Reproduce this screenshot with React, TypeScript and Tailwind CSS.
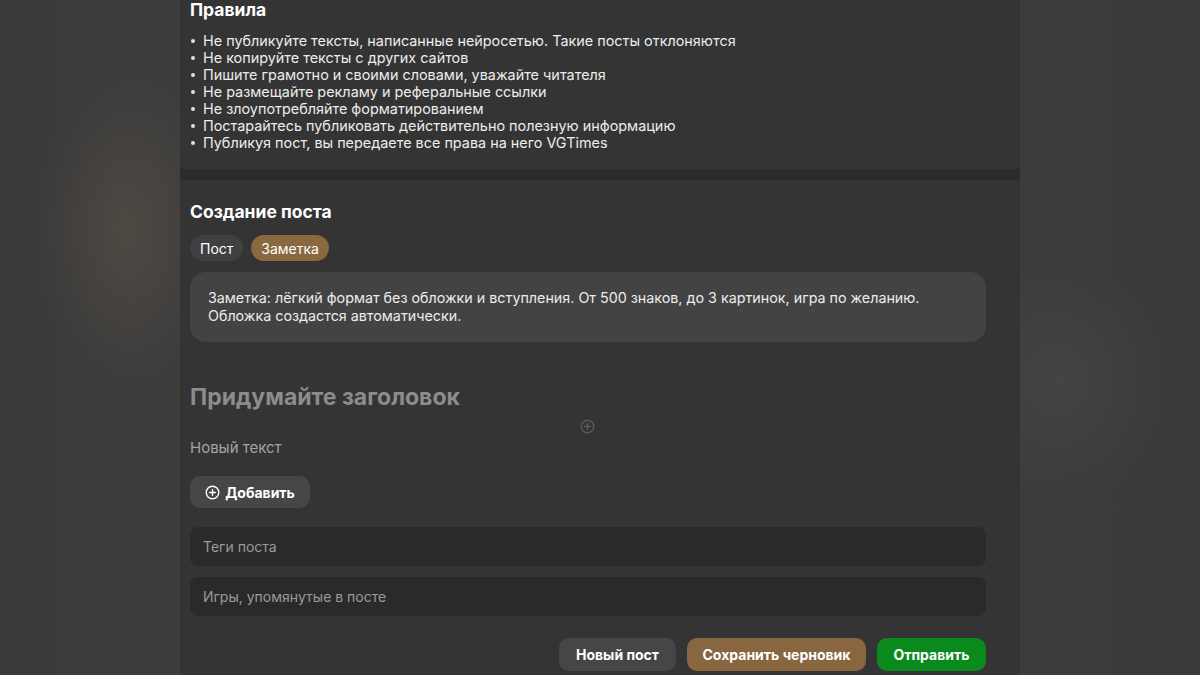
import { useState } from "react";

const rules = [
  "Не публикуйте тексты, написанные нейросетью. Такие посты отклоняются",
  "Не копируйте тексты с других сайтов",
  "Пишите грамотно и своими словами, уважайте читателя",
  "Не размещайте рекламу и реферальные ссылки",
  "Не злоупотребляйте форматированием",
  "Постарайтесь публиковать действительно полезную информацию",
  "Публикуя пост, вы передаете все права на него VGTimes",
];

function CirclePlus({ className }: { className?: string }) {
  return (
    <svg viewBox="0 0 24 24" fill="none" stroke="currentColor" strokeWidth={2.2} strokeLinecap="round" className={className}>
      <circle cx="12" cy="12" r="10" />
      <path d="M12 7.5v9M7.5 12h9" />
    </svg>
  );
}

export default function App() {
  const [kind, setKind] = useState<"post" | "note">("note");

  return (
    <div
      className="min-h-[675px] w-full flex justify-center font-['Inter',sans-serif] text-white bg-[#383838] bg-[radial-gradient(ellipse_90px_160px_at_125px_230px,rgba(120,100,80,0.3),transparent),radial-gradient(ellipse_110px_120px_at_1060px_380px,rgba(80,80,80,0.4),transparent),linear-gradient(to_right,#3a3a3a,#424242_40%,#3a3a3a)]"
    >
      <main className="w-[840px] bg-[#343434] flex flex-col">
        {/* rules */}
        <section className="pl-[10px] pr-[34px] pb-[18px]">
          <h2 className="text-[17.5px] leading-[20px] font-bold">Правила</h2>
          <ul className="mt-3 text-[14.4px] leading-[17px] text-[#ececec]">
            {rules.map((r) => (
              <li key={r} className="flex items-center">
                <span className="w-[13px] shrink-0 flex">
                  <span className="ml-[1px] w-[4px] h-[4px] rounded-full bg-[#e0e0e0]" />
                </span>
                <span>{r}</span>
              </li>
            ))}
          </ul>
        </section>

        <div className="h-[11px] bg-[#2b2b2b]" />

        {/* editor */}
        <section className="relative pl-[10px] pr-[34px] pt-[22px] pb-[3px]">
          <h2 className="text-[17.5px] leading-[20px] font-bold">Создание поста</h2>

          <div className="mt-[13px] flex gap-2 text-[14px]">
            <button
              onClick={() => setKind("post")}
              className={`h-[26px] px-[10px] rounded-full ${kind === "post" ? "bg-[#8a6940]" : "bg-[#404040]"}`}
            >
              Пост
            </button>
            <button
              onClick={() => setKind("note")}
              className={`h-[26px] px-[10px] rounded-full ${kind === "note" ? "bg-[#8a6940]" : "bg-[#404040]"}`}
            >
              Заметка
            </button>
          </div>

          <div className="mt-[11px] h-[70px] rounded-[16px] bg-[#434343] px-[18px] pt-[17px] text-[14.3px] leading-[18px] text-[#ececec]">
            Заметка: лёгкий формат без обложки и вступления. От 500 знаков, до 3 картинок, игра по желанию.
            <br />
            Обложка создастся автоматически.
          </div>

          <h1 className="mt-[41px] text-[23px] leading-[28px] font-bold text-[#8c8c8c]">Придумайте заголовок</h1>

          <CirclePlus className="absolute left-[400px] top-[239px] w-[15px] h-[15px] text-[#5a5a5a]" />

          <p className="mt-[28px] text-[15px] leading-[18px] text-[#a3a3a3]">Новый текст</p>

          <button className="mt-[19px] h-[32px] w-[120px] rounded-[10px] bg-[#464646] flex items-center justify-center gap-[5px] text-[14px] font-bold">
            <CirclePlus className="w-[15px] h-[15px]" />
            Добавить
          </button>

          <div className="mt-[19px] flex flex-col gap-[11px]">
            <input
              placeholder="Теги поста"
              className="h-[39px] w-full rounded-[8px] bg-[#2a2a2a] px-[13px] text-[14px] placeholder:text-[#9a9a9a] outline-none"
            />
            <input
              placeholder="Игры, упомянутые в посте"
              className="h-[39px] w-full rounded-[8px] bg-[#2a2a2a] px-[13px] text-[14px] placeholder:text-[#9a9a9a] outline-none"
            />
          </div>

          <div className="mt-[22px] flex justify-end gap-[11px] text-[14px] font-bold">
            <button className="h-[33px] w-[117px] rounded-[10px] bg-[#464646]">Новый пост</button>
            <button className="h-[33px] w-[179px] rounded-[10px] bg-[#876640]">Сохранить черновик</button>
            <button className="h-[33px] w-[109px] rounded-[10px] bg-[#0a8a1c]">Отправить</button>
          </div>
        </section>
      </main>
    </div>
  );
}
